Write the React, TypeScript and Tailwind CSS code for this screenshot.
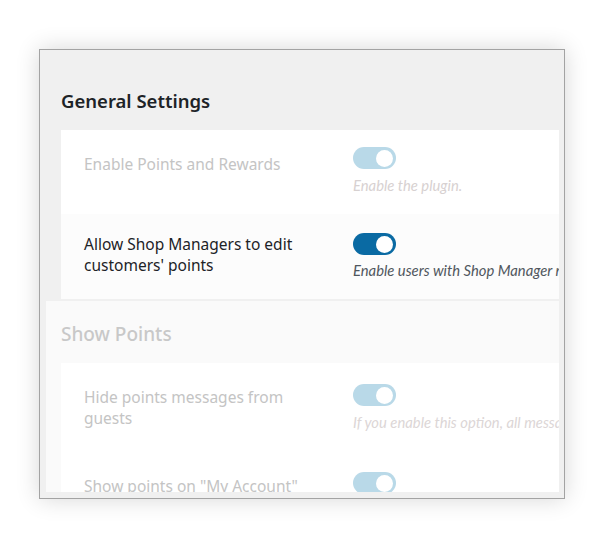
import type { ReactNode } from "react";

type ToggleProps = {
  dark?: boolean;
  peek?: boolean;
};

function Toggle({ dark = false, peek = false }: ToggleProps) {
  return (
    <div
      className={`relative h-[22px] w-[43px] rounded-full ${
        dark ? "bg-[#0a6aa3]" : "bg-[#b9d9e8]"
      }`}
    >
      <span className="absolute right-[3px] top-[2.5px] h-[17px] w-[17px] rounded-full bg-white" />
      {peek && (
        <span className="absolute bottom-0 left-[4px] h-[2px] w-[35px] bg-[#0a6aa3]" />
      )}
    </div>
  );
}

type RowProps = {
  label: ReactNode;
  desc: string;
  labelPt: string;
  controlPt: string;
  descMt: string;
  height: string;
  muted?: boolean;
  dark?: boolean;
  peek?: boolean;
  descTone: string;
  bg?: string;
};

function Row({
  label,
  desc,
  labelPt,
  controlPt,
  descMt,
  height,
  muted = false,
  dark = false,
  peek = false,
  descTone,
  bg = "bg-white",
}: RowProps) {
  return (
    <div className={`flex pl-[23px] ${height} ${bg}`}>
      <div
        className={`w-[269px] shrink-0 text-[15.5px] leading-[21px] font-['Noto_Sans',sans-serif] ${labelPt} ${
          muted ? "text-[#c4c4c4]" : "text-[#1d2327]"
        }`}
      >
        {label}
      </div>
      <div className={`min-w-0 flex-1 overflow-hidden ${controlPt}`}>
        <Toggle dark={dark} peek={peek} />
        <p
          className={`whitespace-nowrap text-[14.8px] italic leading-[18px] font-['Lato',sans-serif] ${descMt} ${descTone}`}
        >
          {desc}
        </p>
      </div>
    </div>
  );
}

export default function App() {
  return (
    <div className="h-[550px] w-[600px] bg-white pl-[39px] pt-[49px]">
      <div className="flex h-[450px] w-[526px] flex-col overflow-hidden border border-[#a3a3a3] bg-[#f0f0f0] shadow-[0_0_22px_rgba(0,0,0,0.16)]">
        <h2 className="pl-[21px] pt-[39px] text-[18.5px] font-semibold leading-[24px] text-[#1d2327] font-['Noto_Sans',sans-serif]">
          General Settings
        </h2>

        <div className="ml-[21px] mr-[5px] mt-[17px] overflow-hidden">
          <Row
            label="Enable Points and Rewards"
            desc="Enable the plugin."
            labelPt="pt-[24px]"
            controlPt="pt-[17px]"
            descMt="mt-[7px]"
            height="h-[84px]"
            muted
            descTone="text-[#d7d1d1]"
          />
          <Row
            label={
              <>
                Allow Shop Managers to edit
                <br />
                customers' points
              </>
            }
            desc="Enable users with Shop Manager role to edit customers' points"
            labelPt="pt-[20px]"
            controlPt="pt-[19px]"
            descMt="mt-[6px]"
            height="h-[85px]"
            dark
            descTone="text-[#50575e]"
            bg="bg-[#fcfcfc]"
          />
        </div>

        <div className="ml-[6px] mr-[5px] mt-[2px] h-[191px] overflow-hidden bg-[#fafafa]">
          <h3 className="pl-[15px] pt-[21px] text-[19px] leading-[24px] font-medium text-[#c8c8c8] font-['Noto_Sans',sans-serif]">
            Show Points
          </h3>
          <div className="ml-[15px] mt-[17px] overflow-hidden">
            <Row
              label={
                <>
                  Hide points messages from
                  <br />
                  guests
                </>
              }
              desc="If you enable this option, all messages will be hidden from guests"
              labelPt="pt-[24px]"
              controlPt="pt-[21px]"
              descMt="mt-[7px]"
              height="h-[89px]"
              muted
              descTone="text-[#dcd6d6]"
            />
            <Row
              label={<>Show points on "My Account"</>}
              desc="Show points on the My Account page"
              labelPt="pt-[24px]"
              controlPt="pt-[20px]"
              descMt="mt-[7px]"
              height="h-[60px]"
              muted
              peek
              descTone="text-[#dcd6d6]"
            />
          </div>
        </div>
      </div>
    </div>
  );
}
